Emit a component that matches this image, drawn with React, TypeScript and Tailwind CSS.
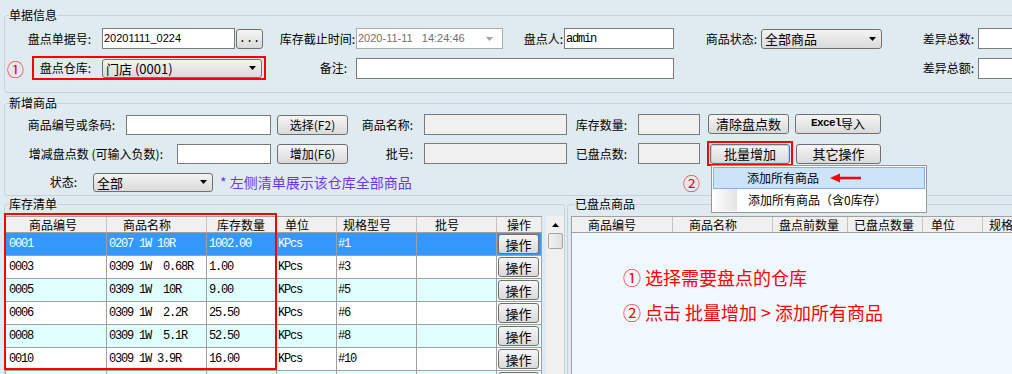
import React from 'react';

const sans = "font-['Noto_Sans_CJK_SC',sans-serif]";
const mono = "font-['Liberation_Mono','Noto_Sans_CJK_SC',monospace]";
const latin = "font-['Liberation_Sans','Noto_Sans_CJK_SC',sans-serif]";

type P = { className?: string; children?: React.ReactNode };

function Label({ className = '', children }: P) {
  return (
    <div className={`shrink-0 whitespace-nowrap text-right text-[12px] leading-[16px] ${className}`}>{children}</div>
  );
}

function TextBox({ className = '', children, gray = false }: P & { gray?: boolean }) {
  return (
    <div
      className={`shrink-0 flex items-center overflow-hidden whitespace-pre border border-[#7a7a7a] pl-[1px] ${
        gray ? 'bg-[#f0f0f0]' : 'bg-white'
      } ${className}`}
    >
      {children}
    </div>
  );
}

function Btn({ className = '', children }: P) {
  return (
    <button
      type="button"
      className={`shrink-0 flex items-center justify-center rounded-[3px] border border-[#707070] bg-linear-to-b from-[#f6f6f6] to-[#dadada] text-[12px] leading-none ${className}`}
    >
      {children}
    </button>
  );
}

function DownArrow({ color = '#000' }: { color?: string }) {
  return (
    <svg width="7" height="4" viewBox="0 0 7 4">
      <path d="M0 0h7L3.5 4z" fill={color} />
    </svg>
  );
}

function Combo({ className = '', children }: P) {
  return (
    <div
      className={`shrink-0 flex items-center justify-between rounded-[3px] border border-[#707070] bg-linear-to-b from-[#f4f4f4] to-[#dadada] pl-[3px] pr-[5px] text-[13px] leading-none ${className}`}
    >
      <span className="whitespace-pre">{children}</span>
      <DownArrow />
    </div>
  );
}

const stock = [
  { code: '0001', name: '0207 1W 10R', qty: '1002.00', unit: 'KPcs', spec: '#1' },
  { code: '0003', name: '0309 1W  0.68R', qty: '1.00', unit: 'KPcs', spec: '#3' },
  { code: '0005', name: '0309 1W  10R', qty: '9.00', unit: 'KPcs', spec: '#5' },
  { code: '0006', name: '0309 1W  2.2R', qty: '25.50', unit: 'KPcs', spec: '#6' },
  { code: '0008', name: '0309 1W  5.1R', qty: '52.50', unit: 'KPcs', spec: '#8' },
  { code: '0010', name: '0309 1W 3.9R', qty: '16.00', unit: 'KPcs', spec: '#10' },
  { code: '', name: '', qty: '', unit: '', spec: '' },
];

const cell = 'flex items-center overflow-hidden whitespace-pre border-r border-[#a0a0a0]';
const head = 'flex items-center whitespace-nowrap border-r border-[#c4c4c4]';

export default function App() {
  return (
    <div className={`relative w-[1012px] h-[374px] overflow-hidden bg-[#e0ebf1] text-black ${sans}`}>
      <div className="w-[1060px] pt-[7px]">
        {/* 单据信息 */}
        <fieldset className="ml-[4px] w-[1050px] rounded-[3px] border border-[#c6d3da] pt-[5px] pb-[12px]">
          <legend className="ml-[4px] text-[12px] leading-[16px]">单据信息</legend>
          <div className="flex h-[21px] items-center">
            <Label className="w-[97px] pr-[11px]">盘点单据号:</Label>
            <TextBox className={`w-[133px] h-[21px] text-[11px] ${latin}`}>20201111_0224</TextBox>
            <Btn className={`ml-[1px] w-[27px] h-[20px] ${mono} text-[10px]`}>...</Btn>
            <Label className="w-[93px] pr-[1px]">库存截止时间:</Label>
            <div className="shrink-0 flex h-[21px] w-[147px] items-center border border-[#acacac] bg-white">
              <span className={`w-[113px] overflow-hidden whitespace-pre pl-[1px] text-[11px] text-[#707070] ${latin}`}>
                2020-11-11   14:24:46
              </span>
              <span className="ml-[16px]">
                <DownArrow color="#a0a0a0" />
              </span>
            </div>
            <Label className="w-[61px] pr-[1px]">盘点人:</Label>
            <TextBox className={`w-[110px] h-[21px] text-[12px] tracking-[-1.2px] ${mono}`}>admin</TextBox>
            <Label className="w-[87px] pr-[4px]">商品状态:</Label>
            <Combo className="w-[121px] h-[20px]">全部商品</Combo>
            <Label className="w-[96px] pr-[4px]">差异总数:</Label>
            <TextBox className="w-[62px] h-[21px]" />
          </div>
          <div className="mt-[7px] flex h-[24px] items-center">
            <span className="ml-[2px] w-[17px] text-[17px] leading-none text-[#ff0000]">①</span>
            <div className="ml-[8px] flex h-[24px] w-[234px] shrink-0 items-center border-2 border-[#ff0000]">
              <Label className="w-[68px] pr-[11px]">盘点仓库:</Label>
              <Combo className="w-[160px] h-[19px]">门店 (0001)</Combo>
            </div>
            <Label className="w-[90px] pr-[9px]">备注:</Label>
            <TextBox className="w-[318px] h-[21px]" />
            <Label className="w-[304px] pr-[4px]">差异总额:</Label>
            <TextBox className="w-[62px] h-[21px]" />
          </div>
        </fieldset>

        {/* 新增商品 */}
        <fieldset className="mt-[2px] ml-[4px] w-[1050px] rounded-[3px] border border-[#c6d3da] pt-[3px] pb-[3px]">
          <legend className="ml-[4px] text-[12px] leading-[16px]">新增商品</legend>
          <div className="flex h-[21px] items-center">
            <Label className="w-[121px] pr-[11px]">商品编号或条码:</Label>
            <TextBox className="w-[145px] h-[20px]" />
            <Btn className="ml-[6px] w-[71px] h-[20px]">选择(F2)</Btn>
            <Label className="w-[76px] pr-[11px]">商品名称:</Label>
            <TextBox gray className="w-[143px] h-[21px]" />
            <Label className="w-[71px] pr-[11px]">库存数量:</Label>
            <TextBox gray className="w-[62px] h-[21px]" />
            <Btn className="ml-[8px] -mt-[2px] w-[81px] h-[20px] text-[13px]">清除盘点数</Btn>
            <Btn className="ml-[6px] -mt-[2px] w-[86px] h-[20px]">
              <span className={`${mono} text-[11px] font-bold tracking-[-0.6px]`}>Excel</span>导入
            </Btn>
          </div>
          <div className="mt-[8px] flex h-[21px] items-center">
            <Label className="w-[172px] pr-[14px]">增减盘点数 (可输入负数):</Label>
            <TextBox className="w-[94px] h-[20px]" />
            <Btn className="ml-[6px] w-[71px] h-[20px]">增加(F6)</Btn>
            <Label className="w-[76px] pr-[11px]">批号:</Label>
            <TextBox gray className="w-[143px] h-[21px]" />
            <Label className="w-[71px] pr-[11px]">已盘点数:</Label>
            <TextBox gray className="w-[62px] h-[21px]" />
            <div className="ml-[7px] flex h-[25px] w-[86px] shrink-0 items-center justify-center border-2 border-[#ff0000]">
              <Btn className="w-[80px] h-[20px] border-[#3d8fd0] shadow-[inset_0_0_0_1px_#a8dcf8] text-[13px]">批量增加</Btn>
            </div>
            <Btn className="ml-[3px] w-[85px] h-[20px] text-[13px]">其它操作</Btn>
          </div>
          <div className="mt-[8px] flex h-[20px] items-center">
            <Label className="w-[88px] pr-[16px]">状态:</Label>
            <Combo className="w-[120px] h-[19px]">全部</Combo>
            <span className="ml-[7px] w-[463px] shrink-0 text-[14px] leading-[20px] text-[#6c35f2]">* 左侧清单展示该仓库全部商品</span>
            <span className="w-[17px] text-[17px] leading-none text-[#ff0000]">②</span>
          </div>
        </fieldset>

        <div className="flex">
          {/* 库存清单 */}
          <fieldset className="ml-[4px] w-[561px] shrink-0 rounded-[3px] border border-[#c6d3da] pt-[4px]">
            <legend className="ml-[4px] text-[12px] leading-[16px]">库存清单</legend>
            <div className="flex">
              <div className="w-[537px] shrink-0 border-l border-[#a0a0a0]">
                <div className="flex h-[17px] border-y border-[#a0a0a0] bg-[#f0f0f0] text-[12px] leading-[15px]">
                  <div className={`${head} w-[101px] pl-[23px]`}>商品编号</div>
                  <div className={`${head} w-[100px] pl-[16px]`}>商品名称</div>
                  <div className={`${head} w-[70px] pl-[10px]`}>库存数量</div>
                  <div className={`${head} w-[60px] pl-[8px]`}>单位</div>
                  <div className={`${head} w-[80px] pl-[6px]`}>规格型号</div>
                  <div className={`${head} w-[80px] pl-[18px]`}>批号</div>
                  <div className={`${head} w-[45px] pl-[10px]`}>操作</div>
                </div>
                {stock.map((r, i) => {
                  const bg = i === 0 ? 'bg-[#3399ff] text-white' : i % 2 === 1 ? 'bg-white' : 'bg-[#e0ffff]';
                  return (
                    <div key={i} className={`flex h-[23px] border-b border-[#a0a0a0] text-[12px] tracking-[-1.2px] ${mono} ${bg}`}>
                      <div className={`${cell} w-[101px] pl-[3px]`}>{r.code}</div>
                      <div className={`${cell} w-[100px] pl-[2px]`}>{r.name}</div>
                      <div className={`${cell} w-[70px] pl-[2px]`}>{r.qty}</div>
                      <div className={`${cell} w-[60px] pl-[1px]`}>{r.unit}</div>
                      <div className={`${cell} w-[80px] pl-[1px]`}>{r.spec}</div>
                      <div className={`${cell} w-[80px]`} />
                      <div className={`${cell} w-[45px] pl-[1px]`}>
                        <Btn className={`w-[41px] h-[20px] text-black tracking-normal text-[13px] ${sans}`}>
                          {r.code ? '操作' : ''}
                        </Btn>
                      </div>
                    </div>
                  );
                })}
              </div>
              <div className="ml-[4px] flex h-[170px] w-[18px] shrink-0 flex-col items-center bg-[#f0f0f0]">
                <div className="flex h-[17px] items-center">
                  <svg width="7" height="4" viewBox="0 0 7 4">
                    <path d="M3.5 0L7 4H0z" fill="#000" />
                  </svg>
                </div>
                <div className="h-[16px] w-[15px] rounded-[2px] border border-[#a6a6a6] bg-linear-to-r from-[#f2f2f2] to-[#dedede]" />
              </div>
            </div>
          </fieldset>

          {/* 已盘点商品 */}
          <fieldset className="ml-[2px] w-[490px] shrink-0 rounded-[3px] border border-[#c6d3da] pt-[4px]">
            <legend className="ml-[7px] text-[12px] leading-[16px]">已盘点商品</legend>
            <div className="ml-[3px] border-l border-[#a0a0a0]">
              <div className="flex h-[17px] border-y border-[#a0a0a0] bg-[#f0f0f0] text-[12px] leading-[15px]">
                <div className={`${head} w-[101px] pl-[16px]`}>商品编号</div>
                <div className={`${head} w-[100px] pl-[16px]`}>商品名称</div>
                <div className={`${head} w-[75px] pl-[6px]`}>盘点前数量</div>
                <div className={`${head} w-[75px] pl-[6px]`}>已盘点数量</div>
                <div className={`${head} w-[60px] pl-[8px]`}>单位</div>
                <div className={`${head} w-[80px] pl-[6px]`}>规格型号</div>
              </div>
              <div className="h-[200px] bg-[#f0f8ff] pl-[51px] pt-[27px] text-[18px] leading-[35px] text-[#ff0000]">
                <div>① 选择需要盘点的仓库</div>
                <div>② 点击 批量增加 &gt; 添加所有商品</div>
              </div>
            </div>
          </fieldset>
        </div>
      </div>

      {/* annotation around first three columns */}
      <div className="pointer-events-none absolute left-[4px] top-[213px] h-[157px] w-[273px] border-2 border-[#ff0000]" />

      {/* 批量增加 dropdown menu */}
      <div className="absolute left-[711px] top-[165px] z-10 h-[48px] w-[216px] border border-[#979797] bg-white p-[1px] text-[12px]">
        <div className="flex h-[22px] items-center border border-[#7fb2e5] bg-[#cce4f8] pl-[33px]">
          <span>添加所有商品</span>
          <svg className="ml-[11px]" width="31" height="10" viewBox="0 0 31 10">
            <path d="M9 5H31" stroke="#ff0000" strokeWidth="2.5" />
            <path d="M0 5L10 0.5V9.5z" fill="#ff0000" />
          </svg>
        </div>
        <div className="flex h-[22px] items-center">
          <div className="h-full w-[24px] bg-linear-to-r from-[#ffffff] to-[#e4e4e4]" />
          <span className="pl-[11px]">添加所有商品（含0库存）</span>
        </div>
      </div>
    </div>
  );
}
